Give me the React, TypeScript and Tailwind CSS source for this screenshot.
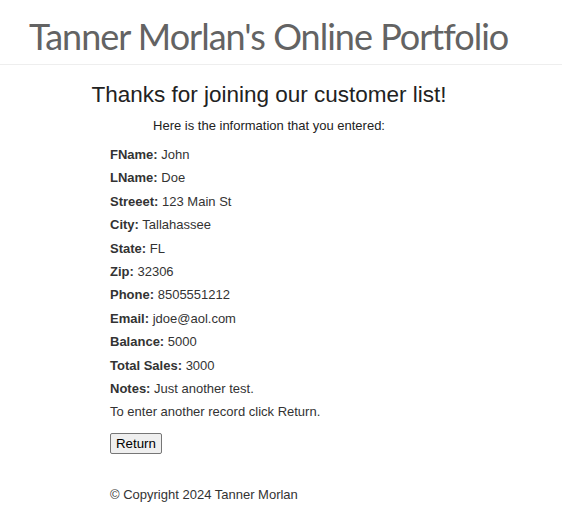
const fields: [string, string][] = [
  ["FName:", "John"],
  ["LName:", "Doe"],
  ["Streeet:", "123 Main St"],
  ["City:", "Tallahassee"],
  ["State:", "FL"],
  ["Zip:", "32306"],
  ["Phone:", "8505551212"],
  ["Email:", "jdoe@aol.com"],
  ["Balance:", "5000"],
  ["Total Sales:", "3000"],
  ["Notes:", "Just another test."],
];

export default function App() {
  return (
    <div className="min-h-screen bg-white text-[#333] text-[13px] font-['Liberation_Sans',Arial,sans-serif]">
      {/* Header */}
      <header className="h-[65px] border-b border-[#eee] pl-[29px] pt-[16px]">
        <h1 className="text-[36px] leading-[40px] tracking-[-1px] text-[#636363] font-['Lato','DejaVu_Sans',sans-serif]">
          Tanner Morlan's Online Portfolio
        </h1>
      </header>

      {/* Content */}
      <main className="w-[400px] ml-[69px] pt-[15px]">
        <h2 className="text-center text-[22.5px] leading-[30px] text-[#222]">
          Thanks for joining our customer list!
        </h2>
        <p className="text-center text-[13px] leading-[16px] mt-[8px] text-[#222]">
          Here is the information that you entered:
        </p>

        <div className="pl-[41px] mt-[9px]">
          {fields.map(([label, value]) => (
            <div key={label} className="leading-[23.4px]">
              <span className="font-bold">{label}</span> {value}
            </div>
          ))}
          <div className="leading-[23.4px]">To enter another record click Return.</div>

          <button className="mt-[9px] h-[21px] px-[5px] text-[13.3px] leading-[17px] text-black bg-[#efefef] border border-[#767676] rounded-[2px]">
            Return
          </button>

          <p className="mt-[33px] leading-[16px]">© Copyright 2024 Tanner Morlan</p>
        </div>
      </main>
    </div>
  );
}
